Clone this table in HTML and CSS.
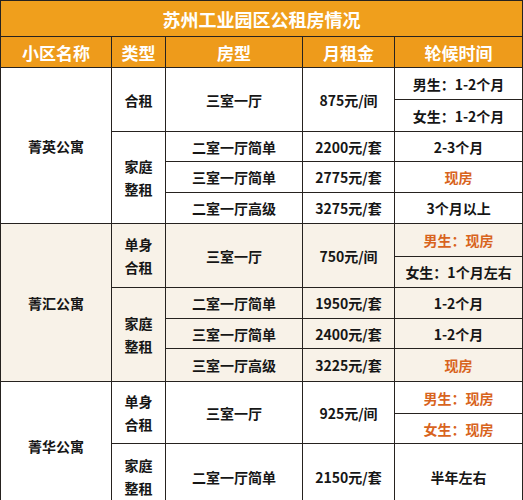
FILE: index.html
```html
<!DOCTYPE html>
<html lang="zh-CN">
<head>
<meta charset="utf-8">
<title>苏州工业园区公租房情况</title>
<link rel="stylesheet" href="styles.css">
</head>
<body>
<table class="rent">
  <colgroup>
    <col class="c1"><col class="c2"><col class="c3"><col class="c4"><col class="c5">
  </colgroup>
  <thead>
    <tr class="title-row"><th colspan="5" class="title">苏州工业园区公租房情况</th></tr>
    <tr class="head-row">
      <th>小区名称</th><th>类型</th><th>房型</th><th>月租金</th><th>轮候时间</th>
    </tr>
  </thead>
  <tbody class="white">
    <tr class="r32">
      <td rowspan="5">菁英公寓</td>
      <td rowspan="2">合租</td>
      <td rowspan="2">三室一厅</td>
      <td rowspan="2">875元/间</td>
      <td>男生：1-2个月</td>
    </tr>
    <tr class="r32"><td>女生：1-2个月</td></tr>
    <tr class="r30">
      <td rowspan="3" class="two">家庭<br>整租</td>
      <td>二室一厅简单</td><td>2200元/套</td><td>2-3个月</td>
    </tr>
    <tr class="r31"><td>三室一厅简单</td><td>2775元/套</td><td class="hot">现房</td></tr>
    <tr class="r31"><td>二室一厅高级</td><td>3275元/套</td><td>3个月以上</td></tr>
  </tbody>
  <tbody class="cream">
    <tr class="r33">
      <td rowspan="5">菁汇公寓</td>
      <td rowspan="2" class="two">单身<br>合租</td>
      <td rowspan="2">三室一厅</td>
      <td rowspan="2">750元/间</td>
      <td class="hot">男生：现房</td>
    </tr>
    <tr class="r31"><td>女生：1个月左右</td></tr>
    <tr class="r31">
      <td rowspan="3" class="two">家庭<br>整租</td>
      <td>二室一厅简单</td><td>1950元/套</td><td>1-2个月</td>
    </tr>
    <tr class="r30"><td>三室一厅简单</td><td>2400元/套</td><td>1-2个月</td></tr>
    <tr class="r33"><td>三室一厅高级</td><td>3225元/套</td><td class="hot">现房</td></tr>
  </tbody>
  <tbody class="white">
    <tr class="r32">
      <td rowspan="3">菁华公寓</td>
      <td rowspan="2" class="two">单身<br>合租</td>
      <td rowspan="2">三室一厅</td>
      <td rowspan="2">925元/间</td>
      <td class="hot">男生：现房</td>
    </tr>
    <tr class="r30"><td class="hot">女生：现房</td></tr>
    <tr class="r66">
      <td class="two">家庭<br>整租</td>
      <td>二室一厅简单</td><td>2150元/套</td><td>半年左右</td>
    </tr>
  </tbody>
</table>
</body>
</html>
```

FILE: styles.css
```css
html, body {
  margin: 0;
  padding: 0;
  background: #ffffff;
}

.rent {
  border-collapse: collapse;
  table-layout: fixed;
  width: 522px;
  font-family: "Noto Sans CJK SC", "Noto Sans", sans-serif;
  font-weight: 700;
  color: #161616;
}

.c1 { width: 111px; }
.c2 { width: 54px; }
.c3 { width: 137px; }
.c4 { width: 92px; }
.c5 { width: 128px; }

.rent th,
.rent td {
  border: 1px solid #26221f;
  padding: 0;
  text-align: center;
  vertical-align: middle;
}

.title-row { height: 36px; }
.title {
  background: #f09f1c;
  color: #ffffff;
  font-size: 18px;
  font-weight: 700;
}

.head-row { height: 31px; }
.head-row th {
  background: #ee9b1b;
  color: #ffffff;
  font-size: 17px;
  font-weight: 700;
}

.rent td {
  font-size: 14px;
  line-height: 20px;
}

.rent td.two {
  line-height: 23px;
}

.white td { background: #ffffff; }
.cream td { background: #f8f2e8; }

.hot { color: #d8641e; }

.r30 { height: 30px; }
.r31 { height: 31px; }
.r32 { height: 32px; }
.r33 { height: 33px; }
.r66 { height: 66px; }
```
